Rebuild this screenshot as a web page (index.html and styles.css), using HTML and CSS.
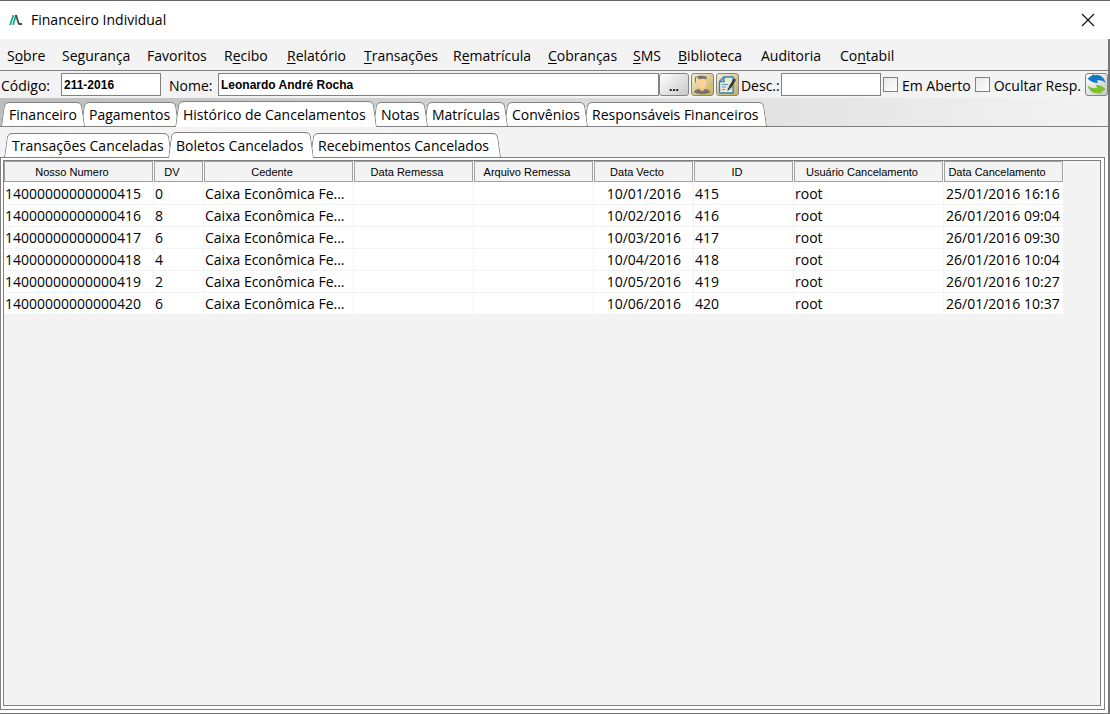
FILE: index.html
```html
<!DOCTYPE html>
<html lang="pt-BR">
<head>
<meta charset="utf-8">
<title>Financeiro Individual</title>
<link rel="stylesheet" href="styles.css">
</head>
<body>
<div class="window">
  <header class="titlebar">
    <svg class="logo" width="14" height="12" viewBox="0 0 14 12" aria-hidden="true"><path d="M1 11 4.500 1M4 11 7 1" stroke="#18a58c" stroke-width="1.800" fill="none"/><path d="M7 1 10 10.500" stroke="#3d4a4c" stroke-width="1.800" fill="none"/><path d="M10 9h3v2h-3z" fill="#3d4a4c"/></svg>
    <h1 class="title">Financeiro Individual</h1>
    <button class="close" type="button" aria-label="Fechar"><svg width="14" height="14" viewBox="0 0 14 14"><path d="M1 1 13 13M13 1 1 13" stroke="#111" stroke-width="1.200"/></svg></button>
  </header>
  <div class="body">
    <nav class="menu">
      <button type="button">S<u>o</u>bre</button>
      <button type="button">Segurança</button>
      <button type="button">Favoritos</button>
      <button type="button">R<u>e</u>cibo</button>
      <button type="button"><u>R</u>elatório</button>
      <button type="button"><u>T</u>ransações</button>
      <button type="button">R<u>e</u>matrícula</button>
      <button type="button"><u>C</u>obranças</button>
      <button type="button"><u>S</u>MS</button>
      <button type="button"><u>B</u>iblioteca</button>
      <button type="button">Auditoria</button>
      <button type="button">Co<u>n</u>tabil</button>
    </nav>
    <form class="toolbar">
      <label class="code-label" for="codigo">Código:</label>
      <input class="field code" id="codigo" type="text" value="211-2016">
      <label class="name-label" for="nome">Nome:</label>
      <input class="field name" id="nome" type="text" value="Leonardo André Rocha">
      <button class="tool browse" type="button">...</button>
      <button class="tool gold" type="button" aria-label="Aluno">
        <svg width="20" height="20" viewBox="0 0 20 20"><path d="M2 17.500q0-3 5-3.500l3 2 3-2q5 .5 5 3.500-8 3.500-16 0z" fill="#74746f"/><path d="M8 11h4.500v3.500L10 16.500 8 14.500z" fill="#f6c382"/><path d="M6 4h8.500v4c0 3-2 5-4.200 5S6 11 6 8z" fill="#ffd196"/><path d="M3 2 8.500.5 14.500 1.500v3q-4-1.500-8 0V3z" fill="#77746c"/><path d="M3.500 2v5.500" stroke="#77746c"/></svg>
      </button>
      <button class="tool gold" type="button" aria-label="Editar">
        <svg width="20" height="20" viewBox="0 0 20 20"><path d="M7 2h9v16H2.500V6.500z" fill="#ece9cf" stroke="#3381c2" stroke-width="1.400"/><path d="M7 2v4.500H2.500" fill="none" stroke="#3381c2" stroke-width="1.400"/><path d="M5 9.500h6M5 12h4M5 14.500h3" stroke="#5b9aca"/><path d="M18 4 12.500 13" stroke="#353b3f" stroke-width="2.600"/><path d="m11 12.500 2.300 1.500-2.800 2z" fill="#353b3f"/></svg>
      </button>
      <label class="desc-label" for="desc">Desc.:</label>
      <input class="field desc" id="desc" type="text">
      <label class="check"><input type="checkbox">Em Aberto</label>
      <label class="check second"><input type="checkbox">Ocultar Resp.</label>
      <button class="tool refresh" type="button" aria-label="Atualizar">
        <svg width="21" height="21" viewBox="0 0 21 21"><path d="M1.500 4.500 8 0v1.500C13 0 18 2.500 19.500 9 17 6.500 14 6 11 6.500L12 9C8 9 4.500 7.500 1.500 4.500z" fill="#1479c4"/><path d="M19.500 15 13 20.500V19C8 20 3 17.500 1.500 11c2.500 2.800 6 3.500 9.500 3l-1-3c4 0 7 1.500 9.500 4z" fill="#7bc12e"/></svg>
      </button>
    </form>
    <div class="tabs main-tabs" role="tablist">
      <button class="tab first" type="button" role="tab"><span>Financeiro</span></button>
      <button class="tab" type="button" role="tab"><span>Pagamentos</span></button>
      <button class="tab selected" type="button" role="tab" aria-selected="true"><span>Histórico de Cancelamentos</span></button>
      <button class="tab" type="button" role="tab"><span>Notas</span></button>
      <button class="tab" type="button" role="tab"><span>Matrículas</span></button>
      <button class="tab" type="button" role="tab"><span>Convênios</span></button>
      <button class="tab" type="button" role="tab"><span>Responsáveis Financeiros</span></button>
    </div>
    <main class="panel">
      <div class="tabs sub-tabs" role="tablist">
        <button class="tab first" type="button" role="tab"><span>Transações Canceladas</span></button>
        <button class="tab selected" type="button" role="tab" aria-selected="true"><span>Boletos Cancelados</span></button>
        <button class="tab" type="button" role="tab"><span>Recebimentos Cancelados</span></button>
      </div>
      <div class="frame">
        <div class="scroll">
          <table class="grid">
            <colgroup><col class="w150"><col class="w50"><col class="w150"><col class="w120"><col class="w120"><col class="w100"><col class="w100"><col class="w150"><col class="w120"></colgroup>
            <thead><tr>
              <th><span>Nosso Numero</span></th><th><span>DV</span></th><th><span>Cedente</span></th><th><span>Data Remessa</span></th><th><span>Arquivo Remessa</span></th><th><span>Data Vecto</span></th><th><span>ID</span></th><th><span>Usuário Cancelamento</span></th><th><span>Data Cancelamento</span></th>
            </tr></thead>
            <tbody>
              <tr><td>14000000000000415</td><td>0</td><td>Caixa Econômica Fe...</td><td></td><td></td><td class="due">10/01/2016</td><td>415</td><td>root</td><td class="stamp">25/01/2016 16:16</td></tr>
              <tr><td>14000000000000416</td><td>8</td><td>Caixa Econômica Fe...</td><td></td><td></td><td class="due">10/02/2016</td><td>416</td><td>root</td><td class="stamp">26/01/2016 09:04</td></tr>
              <tr><td>14000000000000417</td><td>6</td><td>Caixa Econômica Fe...</td><td></td><td></td><td class="due">10/03/2016</td><td>417</td><td>root</td><td class="stamp">26/01/2016 09:30</td></tr>
              <tr><td>14000000000000418</td><td>4</td><td>Caixa Econômica Fe...</td><td></td><td></td><td class="due">10/04/2016</td><td>418</td><td>root</td><td class="stamp">26/01/2016 10:04</td></tr>
              <tr><td>14000000000000419</td><td>2</td><td>Caixa Econômica Fe...</td><td></td><td></td><td class="due">10/05/2016</td><td>419</td><td>root</td><td class="stamp">26/01/2016 10:27</td></tr>
              <tr><td>14000000000000420</td><td>6</td><td>Caixa Econômica Fe...</td><td></td><td></td><td class="due">10/06/2016</td><td>420</td><td>root</td><td class="stamp">26/01/2016 10:37</td></tr>
            </tbody>
          </table>
        </div>
      </div>
    </main>
  </div>
</div>
</body>
</html>
```
FILE: styles.css
```css
* { box-sizing: border-box; }
body {
  margin: 0;
  font: 14px/20px "Open Sans", "Noto Sans", sans-serif;
  color: #000;
}
button, input { font: inherit; color: inherit; margin: 0; padding: 0; }
button { border: 0; background: none; white-space: nowrap; }
svg { display: block; }

.window {
  height: 100vh;
  display: flex;
  flex-direction: column;
  border-top: 1px solid #666;
  background: #fff;
}
.titlebar {
  height: 38px;
  display: flex;
  align-items: center;
  padding: 0 14px 0 9px;
  flex: none;
}
.title { margin: 0 auto 0 8px; font-size: 14px; font-weight: 400; }
.close { padding: 1px; }

.body {
  flex: 1;
  min-height: 0;
  display: flex;
  flex-direction: column;
  background: #f3f3f3;
  border-right: 2px solid #777;
  border-bottom: 1px solid #777;
}
.menu {
  flex: none;
  height: 32px;
  display: grid;
  grid-template-columns: 55px 85px 77px 63px 77px 89px 95px 85px 45px 83px 79px 60px;
  align-items: center;
  padding: 2px 0 0 7px;
  border-bottom: 1px solid #808080;
}
.menu button { text-align: left; }
.menu u { text-underline-offset: 2px; }

.toolbar {
  flex: none;
  height: 27px;
  display: flex;
  align-items: center;
  padding: 0 0 0 1px;
  white-space: nowrap;
}
.code-label { width: 60px; }
.name-label { width: 49px; margin-left: 8px; }
.desc-label { width: 40px; margin-left: 2px; }
.toolbar label { padding-top: 2px; }
.field {
  height: 23px;
  border: 1px solid #808080;
  background: #fff;
  padding: 0 2px;
  font: bold 12px/20px "Liberation Sans", Arial, sans-serif;
  outline: 0;
  min-width: 0;
}
.code, .desc { width: 100px; }
.name { flex: 1; }
.tool {
  flex: none;
  width: 23px;
  height: 23px;
  border: 1px solid #858585;
  border-radius: 3px;
  display: flex;
  align-items: center;
  justify-content: center;
  background: linear-gradient(135deg, #fff, #c8c8c8);
}
.browse { width: 30px; padding-top: 4px; font: bold 12px/20px "Liberation Sans", Arial, sans-serif; }
.gold { margin-left: 2px; background: linear-gradient(135deg, #f2edd0, #c4ae5e); }
.check { display: flex; align-items: center; gap: 4px; margin-left: 2px; }
.check.second { margin-left: 4px; }
.check input {
  appearance: none;
  width: 15px;
  height: 15px;
  margin-top: -3px;
  border: 1px solid #808080;
  background: linear-gradient(135deg, #e8e8e8, #fff);
}
.refresh { margin-left: 4px; }

.tabs { display: grid; align-items: end; flex: none; }
.main-tabs {
  height: 28px;
  padding-left: 1px;
  grid-template-columns: 84px 90px 202px 51px 80px 80px 179px;
  background: linear-gradient(90deg, #bdbdbd, #f3f3f3);
}
.sub-tabs {
  height: 30px;
  padding-left: 4px;
  grid-template-columns: 164px 146px 187px;
}
.tab {
  position: relative;
  height: 24px;
  padding: 2px 0 0 4px;
  text-align: left;
}
.tab span { position: relative; z-index: 1; }
.tab::before, .tab::after {
  content: "";
  position: absolute;
  top: 0;
  bottom: 0;
  width: 60%;
  border-top: 1px solid #808080;
  background: #fff;
  transform-origin: bottom;
}
.tab::before {
  left: -4px;
  border-left: 1px solid #808080;
  border-top-left-radius: 5px;
  transform: skewX(-8deg);
}
.tab::after {
  right: 0;
  border-right: 1px solid #808080;
  border-top-right-radius: 5px;
  transform: skewX(8deg);
}
.tab.first, .tab.selected { padding-left: 8px; }
.tab.first::before, .tab.selected::before { left: 0; }
.tab:nth-child(1) { z-index: 7; }
.tab:nth-child(2) { z-index: 6; }
.tab:nth-child(3) { z-index: 5; }
.tab:nth-child(4) { z-index: 4; }
.tab:nth-child(5) { z-index: 3; }
.tab:nth-child(6) { z-index: 2; }
.tab:nth-child(7) { z-index: 1; }
.tab.selected { z-index: 8; height: 26px; margin-bottom: -1px; }
.tab:has(+ .selected)::after { right: -4px; }

.panel {
  flex: 1;
  min-height: 0;
  display: flex;
  flex-direction: column;
  border-top: 1px solid #808080;
  padding: 0 3px 3px 0;
  background: linear-gradient(#f3f3f3 30px, #fff 30px);
}
.frame {
  flex: 1;
  min-height: 0;
  display: flex;
  border: 1px solid #808080;
  padding: 2px 3px 3px 2px;
  background: #fff;
}
.scroll {
  flex: 1;
  overflow: hidden;
  border: 1px solid #808080;
  background: #f3f3f3;
}
.grid { width: 1060px; table-layout: fixed; border-collapse: separate; border-spacing: 0; }
.w50 { width: 50px; }
.w100 { width: 100px; }
.w120 { width: 120px; }
.w150 { width: 150px; }
.grid th { padding: 0 1px 1px 0; background: #fff; font: 11px/20px "Liberation Sans", Arial, sans-serif; }
.grid th span {
  display: block;
  height: 21px;
  padding-right: 13px;
  border: 1px solid #a0a0a0;
  background: #f3f3f3;
}
.grid td {
  height: 22px;
  padding: 0 0 0 1px;
  line-height: 20px;
  background: #fff;
  border-right: 1px solid #f3f3f3;
  border-bottom: 1px solid #f3f3f3;
  white-space: nowrap;
}
.grid td.due { text-align: right; padding-right: 12px; }
.grid td.stamp { padding-left: 2px; }
```
